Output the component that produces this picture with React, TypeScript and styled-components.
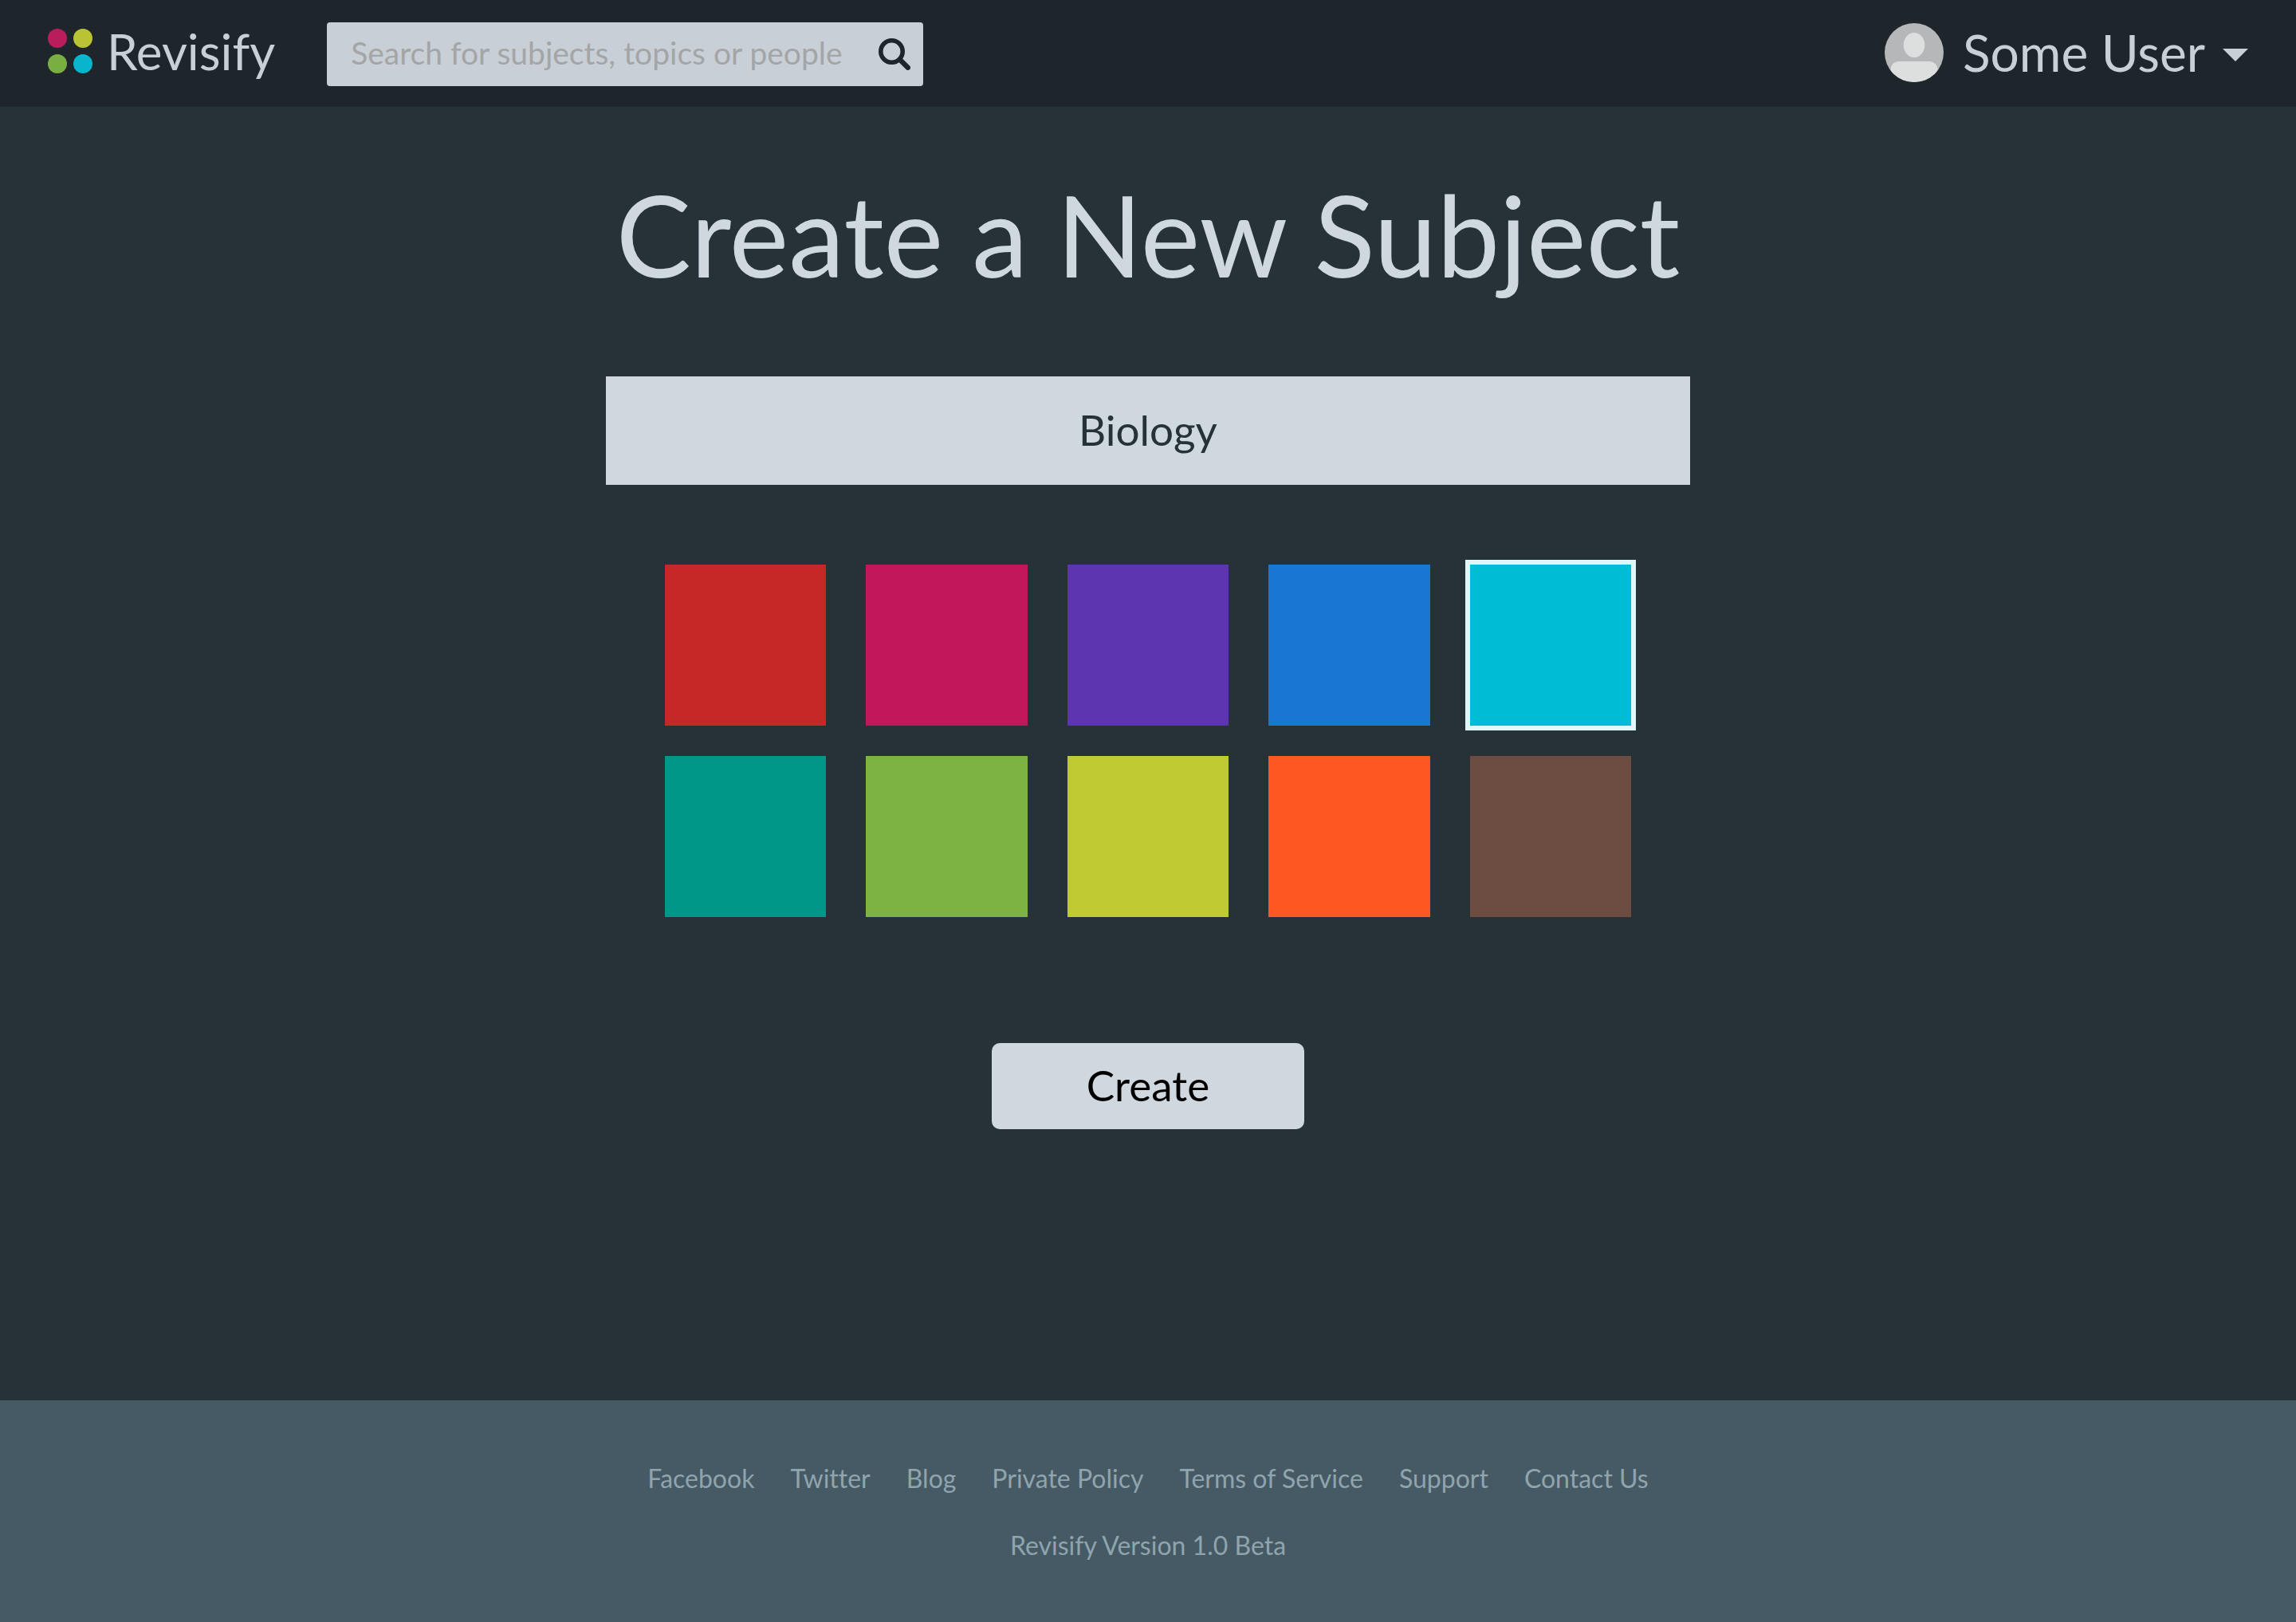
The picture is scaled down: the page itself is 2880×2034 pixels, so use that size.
import React, { useState } from "react";
import styled, { createGlobalStyle } from "styled-components";

const font = `Lato, "Open Sans", sans-serif`;

const GlobalStyle = createGlobalStyle`
  *, *::before, *::after { box-sizing: border-box; }
  body {
    margin: 0;
    background: #263238;
    font-family: ${font};
    font-variant-ligatures: none;
  }
  button, input { font-family: inherit; }
`;

const Page = styled.div`
  min-height: 100vh;
  display: flex;
  flex-direction: column;
  background: #263238;
  color: #cfd8df;
`;

const Header = styled.header`
  display: flex;
  align-items: center;
  padding: 28px 60px 26px;
  background: #1e262c;
  color: #c8d0d7;
`;

const Brand = styled.a`
  display: flex;
  align-items: center;
  gap: 18px;
  padding-bottom: 8px;
  margin-right: 65px;
  color: inherit;
  font-size: 62px;
  line-height: 72px;
  text-decoration: none;
`;

const LogoMark = styled.svg`
  display: block;
  width: 56px;
  height: 56px;
`;

const SearchForm = styled.form`
  display: flex;
  align-items: center;
  flex: 0 1 748px;
  height: 80px;
  border-radius: 4px;
  background: #c8cfd6;
`;

const SearchInput = styled.input`
  flex: 1;
  min-width: 0;
  height: 80px;
  padding: 0 0 4px 30px;
  border: 0;
  outline: 0;
  background: transparent;
  color: #1e262c;
  font-size: 39px;
  &::placeholder {
    color: #a3a5a6;
    opacity: 1;
  }
`;

const SearchButton = styled.button`
  display: flex;
  padding: 0 16px;
  border: 0;
  background: transparent;
  color: #1e262c;
  cursor: pointer;
  svg {
    width: 40px;
    height: 40px;
  }
`;

const UserMenu = styled.button`
  display: flex;
  align-items: center;
  margin-left: auto;
  padding: 0 0 4px;
  border: 0;
  background: transparent;
  color: inherit;
  font-size: 64px;
  line-height: 72px;
  white-space: nowrap;
  cursor: pointer;
`;

const Avatar = styled.svg`
  width: 74px;
  height: 74px;
  margin-right: 24px;
`;

const Caret = styled.svg`
  width: 32px;
  height: 16px;
  margin: 6px 0 0 22px;
`;

const Main = styled.main`
  flex: 1;
  display: flex;
  flex-direction: column;
  align-items: center;
  padding: 76px 40px 160px;
`;

const Title = styled.h1`
  margin: 0 0 94px;
  font-size: 141px;
  font-weight: 400;
  line-height: 168px;
  text-align: center;
`;

const SubjectForm = styled.form`
  display: flex;
  flex-direction: column;
  align-items: center;
  width: 100%;
  max-width: 1360px;
`;

const NameInput = styled.input`
  width: 100%;
  height: 136px;
  padding: 0 0 4px;
  border: 0;
  border-radius: 0;
  outline: 0;
  background: #cfd8df;
  color: #263238;
  font-size: 53px;
  text-align: center;
`;

const Swatches = styled.fieldset`
  display: grid;
  grid-template-columns: repeat(5, 1fr);
  gap: 38px 50px;
  width: 100%;
  max-width: 1212px;
  margin: 100px 0 158px;
  padding: 0;
  border: 0;
`;

const Swatch = styled.input<{ $color: string }>`
  appearance: none;
  display: block;
  width: 100%;
  height: 202px;
  margin: 0;
  background: ${(p) => p.$color};
  cursor: pointer;
  &:checked {
    box-shadow: 0 0 0 6px #e0f7fa;
  }
`;

const CreateButton = styled.button`
  width: 392px;
  height: 108px;
  padding: 0 0 4px;
  border: 0;
  border-radius: 10px;
  background: #cfd8df;
  color: #000;
  font-size: 53px;
  cursor: pointer;
`;

const Footer = styled.footer`
  display: flex;
  flex-direction: column;
  align-items: center;
  gap: 44px;
  padding: 78px 40px 76px;
  background: #455a64;
  color: #90a4ae;
  font-size: 32px;
  line-height: 40px;
`;

const FooterNav = styled.nav`
  display: flex;
  flex-wrap: wrap;
  justify-content: center;
  gap: 45px;
`;

const FooterLink = styled.a`
  color: inherit;
  text-decoration: none;
`;

const Version = styled.p`
  margin: 0;
`;

const COLORS = [
  { name: "Red", value: "#c62828" },
  { name: "Pink", value: "#c2185b" },
  { name: "Purple", value: "#5e35b1" },
  { name: "Blue", value: "#1976d2" },
  { name: "Cyan", value: "#00bcd4" },
  { name: "Teal", value: "#009688" },
  { name: "Green", value: "#7cb342" },
  { name: "Lime", value: "#c0ca33" },
  { name: "Orange", value: "#ff5722" },
  { name: "Brown", value: "#6d4c41" },
];

const LINKS = [
  "Facebook",
  "Twitter",
  "Blog",
  "Private Policy",
  "Terms of Service",
  "Support",
  "Contact Us",
];

export default function App() {
  const [name, setName] = useState("Biology");
  const [color, setColor] = useState("#00bcd4");

  return (
    <Page>
      <GlobalStyle />
      <Header>
        <Brand href="#">
          <LogoMark viewBox="0 0 56 56" aria-hidden="true">
            <circle cx="12" cy="12" r="12" fill="#b91d5b" />
            <circle cx="44" cy="12" r="12" fill="#b9c334" />
            <circle cx="12" cy="44" r="12" fill="#79ae43" />
            <circle cx="44" cy="44" r="12" fill="#09b4cd" />
          </LogoMark>
          Revisify
        </Brand>
        <SearchForm role="search" onSubmit={(e) => e.preventDefault()}>
          <SearchInput
            type="text"
            aria-label="Search"
            placeholder="Search for subjects, topics or people"
          />
          <SearchButton type="submit" aria-label="Search">
            <svg viewBox="0 0 40 40" fill="none" stroke="currentColor" aria-hidden="true">
              <circle cx="16.5" cy="16.5" r="13.7" strokeWidth="5.6" />
              <path d="M27 27 36.8 36.8" strokeWidth="6.4" strokeLinecap="round" />
            </svg>
          </SearchButton>
        </SearchForm>
        <UserMenu type="button" aria-haspopup="menu">
          <Avatar viewBox="0 0 74 74" aria-hidden="true">
            <defs>
              <clipPath id="avatar-clip">
                <circle cx="37" cy="37" r="37" />
              </clipPath>
            </defs>
            <g clipPath="url(#avatar-clip)">
              <rect width="74" height="74" fill="#b5b7b9" />
              <ellipse cx="37" cy="27.5" rx="13.3" ry="15.5" fill="#dddfdf" />
              <rect x="7.5" y="48" width="59" height="40" rx="10" fill="#dddfdf" />
            </g>
          </Avatar>
          Some User
          <Caret viewBox="0 0 32 16" aria-hidden="true">
            <path d="M0 0H32L16 16Z" fill="currentColor" />
          </Caret>
        </UserMenu>
      </Header>

      <Main>
        <Title>Create a New Subject</Title>
        <SubjectForm onSubmit={(e) => e.preventDefault()}>
          <NameInput
            type="text"
            aria-label="Subject name"
            value={name}
            onChange={(e) => setName(e.target.value)}
          />
          <Swatches aria-label="Subject color">
            {COLORS.map((c) => (
              <Swatch
                key={c.value}
                type="radio"
                name="color"
                aria-label={c.name}
                value={c.value}
                $color={c.value}
                checked={color === c.value}
                onChange={() => setColor(c.value)}
              />
            ))}
          </Swatches>
          <CreateButton type="submit">Create</CreateButton>
        </SubjectForm>
      </Main>

      <Footer>
        <FooterNav>
          {LINKS.map((label) => (
            <FooterLink key={label} href="#">
              {label}
            </FooterLink>
          ))}
        </FooterNav>
        <Version>Revisify Version 1.0 Beta</Version>
      </Footer>
    </Page>
  );
}
